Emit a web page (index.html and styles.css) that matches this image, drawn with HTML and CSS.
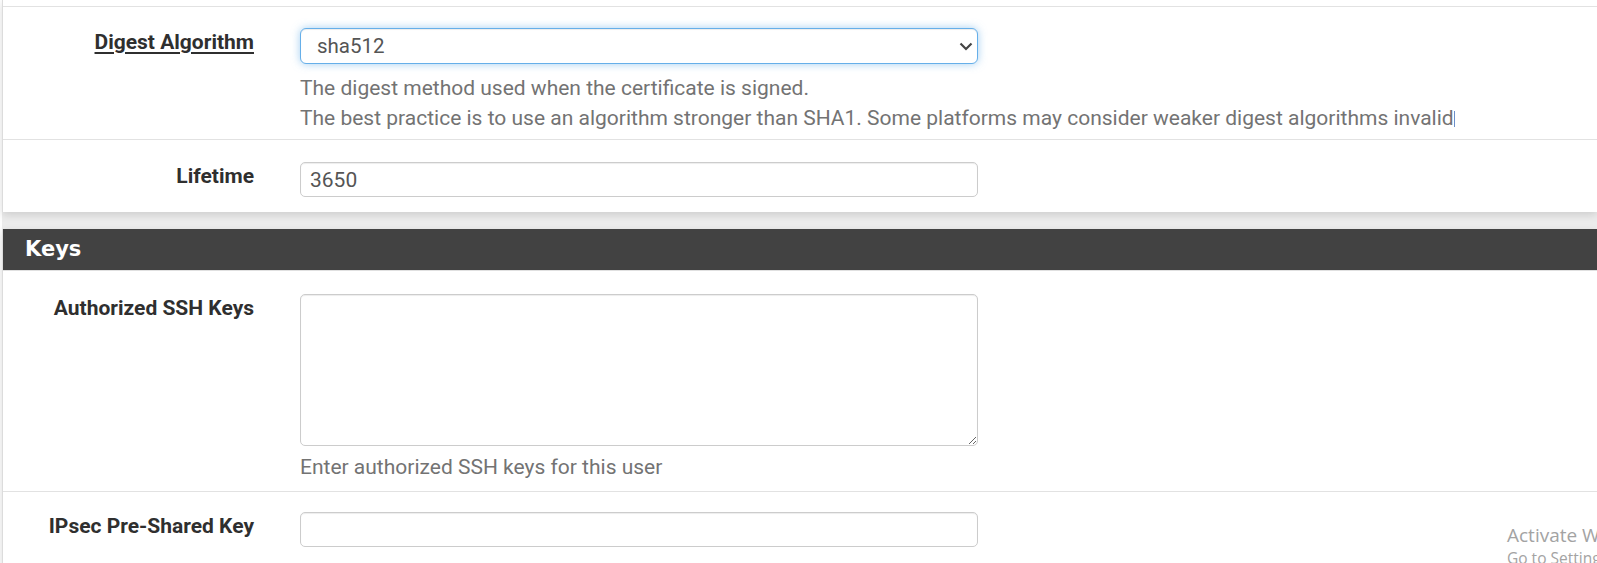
FILE: index.html
```html
<!DOCTYPE html>
<html>
<head>
<meta charset="utf-8">
<title>User settings</title>
<link rel="stylesheet" href="styles.css">
</head>
<body>
<div class="page">
  <section class="panel panel-top">
    <div class="stub"></div>
    <div class="row row-digest">
      <div class="label"><span class="u">Digest Algorithm</span></div>
      <div class="field">
        <div class="select-wrap">
          <select class="control select"><option>sha512</option></select>
          <svg class="chev" width="14" height="9" viewBox="0 0 14 9"><path d="M1.5 1.5 L7 7 L12.5 1.5" fill="none" stroke="#444" stroke-width="2.2"/></svg>
        </div>
        <div class="help help-digest">The digest method used when the certificate is signed.<br>The best practice is to use an algorithm stronger than SHA1. Some platforms may consider weaker digest algorithms invalid<span class="caret"></span></div>
      </div>
    </div>
    <div class="row row-last row-lifetime">
      <div class="label">Lifetime</div>
      <div class="field">
        <input class="control" type="text" value="3650">
      </div>
    </div>
  </section>

  <section class="panel panel-keys">
    <h2 class="panel-title">Keys</h2>
    <div class="row row-ssh">
      <div class="label">Authorized SSH Keys</div>
      <div class="field">
        <textarea class="control textarea"></textarea>
        <div class="help">Enter authorized SSH keys for this user</div>
      </div>
    </div>
    <div class="row row-last row-ipsec">
      <div class="label">IPsec Pre-Shared Key</div>
      <div class="field">
        <input class="control" type="text" value="">
      </div>
    </div>
  </section>

  <div class="watermark">
    <div class="wm-title">Activate Windows</div>
    <div class="wm-sub">Go to Settings to activate Windows.</div>
  </div>
</div>
</body>
</html>
```

FILE: styles.css
```css
html, body {
  margin: 0;
  padding: 0;
}
body {
  background: #ececec;
  font-family: Roboto, "Liberation Sans", sans-serif;
  color: #333;
  overflow: hidden;
  height: 563px;
}
.page {
  position: relative;
  height: 563px;
  padding-left: 2px;
  background: linear-gradient(to right, #fdfdfd 0, #fdfdfd 2px, transparent 2px);
}
.panel {
  background: #fff;
  border-left: 1px solid #dcdcdc;
  box-shadow: 0 3px 8px rgba(0, 0, 0, 0.13);
}
.panel-top {
  margin-bottom: 17px;
}
.stub {
  height: 6px;
  border-bottom: 1px solid #e2e2e2;
}
.row {
  display: grid;
  grid-template-columns: 251px 678px;
  column-gap: 46px;
  align-items: start;
  padding: 21px 0 9px;
  border-bottom: 1px solid #e2e2e2;
}
.row-last {
  border-bottom: none;
}
.row-digest { padding-top: 21px; padding-bottom: 6px; }
.row-lifetime { padding-top: 22px; padding-bottom: 15px; }
.row-ssh { padding-top: 23px; padding-bottom: 9px; }
.row-ipsec { padding-top: 20px; padding-bottom: 20px; }

.label {
  text-align: right;
  font-weight: 700;
  font-size: 21px;
  line-height: 28px;
  color: #2f2f2f;
}
.u {
  text-decoration: underline;
  text-underline-offset: 3px;
  text-decoration-thickness: 2px;
}
.field {
  min-width: 0;
}
.control {
  display: block;
  box-sizing: border-box;
  width: 678px;
  height: 35px;
  margin: 0;
  padding: 0 9px;
  border: 1px solid #cccccc;
  border-radius: 5px;
  background: #fff;
  font-family: Roboto, "Liberation Sans", sans-serif;
  font-size: 21px;
  color: #555;
  box-shadow: inset 0 1px 1px rgba(0, 0, 0, 0.075);
  outline: none;
}
.select-wrap {
  position: relative;
}
.select {
  -webkit-appearance: none;
  appearance: none;
  height: 36px;
  padding-left: 16px;
  font-size: 20.5px;
  border-color: #66afe9;
  border-radius: 6px;
  box-shadow: inset 0 1px 1px rgba(0, 0, 0, 0.075), 0 0 8px rgba(102, 175, 233, 0.6);
}
.chev {
  position: absolute;
  left: 659px;
  top: 14px;
  pointer-events: none;
}
.textarea {
  height: 152px;
  resize: vertical;
  padding: 8px 9px;
}
.help {
  margin-top: 6px;
  font-size: 21px;
  line-height: 30px;
  color: #737373;
  white-space: nowrap;
}
.help-digest {
  margin-top: 9px;
}
.caret {
  display: inline-block;
  width: 1px;
  height: 16px;
  margin-left: 0;
  background: #6b8fca;
  vertical-align: -2px;
}
.panel-title {
  margin: 0;
  height: 42px;
  box-sizing: border-box;
  padding: 0 0 0 22px;
  background: #424242;
  color: #fff;
  font-family: "DejaVu Sans", Verdana, sans-serif;
  font-size: 21px;
  font-weight: 700;
  line-height: 41px;
  border-bottom: 1px solid #e0e0e0;
}
.watermark {
  position: absolute;
  left: 1507px;
  top: 522px;
  color: #a3a3a3;
  font-family: "Open Sans", "Noto Sans", sans-serif;
  white-space: nowrap;
}
.wm-title {
  font-size: 19px;
  line-height: 26px;
}
.wm-sub {
  font-size: 15.5px;
  line-height: 20px;
}
```
